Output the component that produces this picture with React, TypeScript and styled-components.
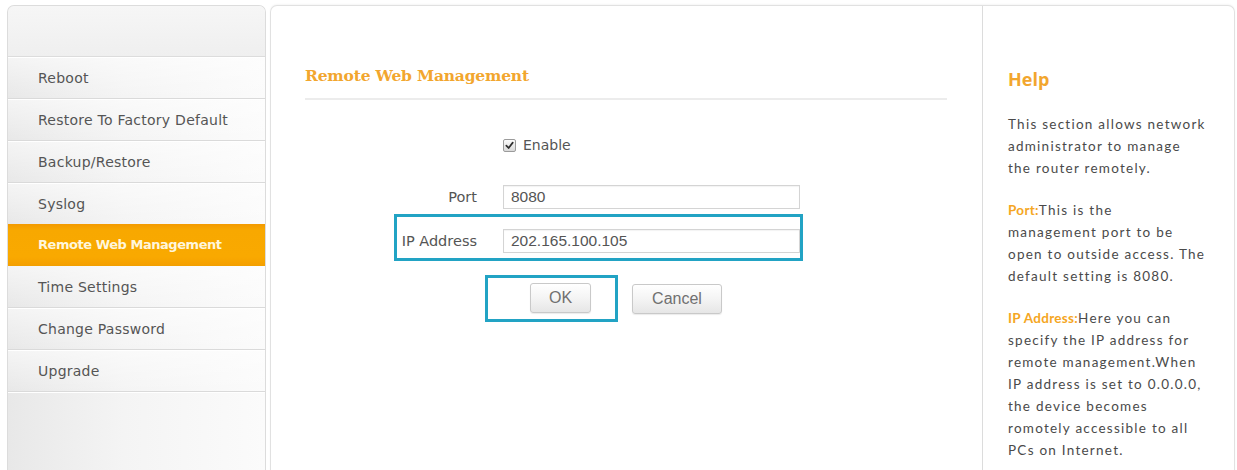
import React from "react";
import styled, { createGlobalStyle } from "styled-components";

const GlobalStyle = createGlobalStyle`
  html, body {
    margin: 0;
    padding: 0;
    background: #ffffff;
  }
  body {
    font-family: "DejaVu Sans", sans-serif;
    overflow: hidden;
  }
  * { box-sizing: border-box; }
`;

const Page = styled.div`
  display: flex;
  gap: 4px;
  height: 470px;
  padding: 5px 2px 0 7px;
  overflow: hidden;
`;

/* ---------- left navigation ---------- */

const Sidebar = styled.nav`
  width: 259px;
  flex-shrink: 0;
  height: 480px;
  border: 1px solid #dcdcdc;
  border-bottom: none;
  border-radius: 7px 7px 0 0;
  background: linear-gradient(to right, #e8e8e8 0%, #f4f4f4 45%, #fbfbfb 100%);
  overflow: hidden;
  display: flex;
  flex-direction: column;
`;

const SidebarHead = styled.div`
  height: 51px;
  border-bottom: 1px solid #dcdcdc;
  background: linear-gradient(to bottom, #f6f6f6, #efefef);
  box-shadow: 0 1px 0 #ffffff;
`;

const NavItem = styled.div<{ $active?: boolean }>`
  height: 42px;
  display: flex;
  align-items: center;
  padding-left: 30px;
  font-size: ${(p) => (p.$active ? "13px" : "14px")};
  letter-spacing: ${(p) => (p.$active ? "-0.45px" : "0.25px")};
  border-bottom: 1px solid ${(p) => (p.$active ? "#f2a000" : "#dadada")};
  box-shadow: ${(p) => (p.$active ? "none" : "0 1px 0 #ffffff")};
  color: ${(p) => (p.$active ? "#fff6dc" : "#555555")};
  font-weight: ${(p) => (p.$active ? 700 : 400)};
  background: ${(p) =>
    p.$active
      ? "linear-gradient(to bottom, #f39a00 0%, #f8a800 15%, #f9a900 80%, #f5a000 100%)"
      : "linear-gradient(to bottom, rgba(255,255,255,0.55), rgba(255,255,255,0))"};
  margin-top: ${(p) => (p.$active ? "-1px" : "0")};
`;

/* ---------- main panel ---------- */

const Panel = styled.main`
  flex: 1;
  height: 480px;
  border: 1px solid #e1e1e1;
  border-bottom: none;
  border-radius: 7px 7px 0 0;
  box-shadow: 0 -1px 2px rgba(0, 0, 0, 0.04);
  display: flex;
  background: #ffffff;
`;

const Content = styled.section`
  width: 711px;
  flex-shrink: 0;
  padding-top: 59px;
`;

const Heading = styled.h2`
  margin: 0 35px 0 34px;
  padding-bottom: 11px;
  border-bottom: 2px solid #ececec;
  font-family: "DejaVu Serif", serif;
  font-size: 15.5px;
  line-height: 22px;
  font-weight: 700;
  color: #f2a62e;
  letter-spacing: -0.2px;
`;

const Form = styled.div`
  margin: 35px 0 0 123px;
  display: flex;
  flex-direction: column;
`;

const Row = styled.div<{ $highlight?: boolean }>`
  width: 409px;
  display: flex;
  align-items: center;
  gap: 26px;
  border: 3px solid ${(p) => (p.$highlight ? "#22a3c4" : "transparent")};
  padding: ${(p) => (p.$highlight ? "12px 0 5px" : "0")};
  margin-top: ${(p) => (p.$highlight ? "2px" : "0")};
`;

const CheckRow = styled(Row)`
  height: 20px;
  margin-bottom: 27px;
`;

const Label = styled.label`
  width: 80px;
  flex-shrink: 0;
  text-align: right;
  font-size: 14.5px;
  color: #555555;
`;

const TextInput = styled.div`
  width: 297px;
  height: 24px;
  border: 1px solid #d4d4d4;
  box-shadow: inset 0 1px 1px rgba(0, 0, 0, 0.05);
  padding-left: 7px;
  display: flex;
  align-items: center;
  font-family: "Liberation Sans", Arial, sans-serif;
  font-size: 15.5px;
  color: #555555;
  background: #ffffff;
`;

const CheckLabel = styled.label`
  display: flex;
  align-items: center;
  gap: 7px;
  font-size: 14px;
  color: #555555;
`;

const CheckBox = styled.span`
  width: 13px;
  height: 13px;
  border: 1px solid #9b9b9b;
  border-radius: 2px;
  background: linear-gradient(to bottom, #fbfbfb, #d9d9d9);
  display: flex;
  align-items: center;
  justify-content: center;
`;

const Actions = styled.div`
  display: flex;
  align-items: center;
  gap: 14px;
  margin: 14px 0 0 91px;
`;

const Frame = styled.div`
  border: 3px solid #22a3c4;
  padding: 5px 24px 6px 42px;
`;

const Button = styled.button<{ $w: number }>`
  width: ${(p) => p.$w}px;
  height: 30px;
  border: 1px solid #c9c9c9;
  border-radius: 3px;
  background: linear-gradient(to bottom, #ffffff 0%, #f4f4f4 50%, #e6e6e6 100%);
  box-shadow: 0 1px 1px rgba(0, 0, 0, 0.08);
  font-family: "Liberation Sans", Arial, sans-serif;
  font-size: 16px;
  color: #707070;
  padding: 0;
  cursor: pointer;
`;

/* ---------- help column ---------- */

const Help = styled.aside`
  flex: 1;
  border-left: 1px solid #dcdcdc;
  padding: 61px 4px 0 25px;
`;

const HelpTitle = styled.h3`
  margin: 0 0 22px;
  font-family: "Open Sans", sans-serif;
  font-size: 18px;
  line-height: 24px;
  font-weight: 700;
  color: #f2a62e;
`;

const HelpText = styled.p`
  margin: 0 0 20px;
  font-family: Lato, sans-serif;
  font-size: 13.5px;
  line-height: 22px;
  letter-spacing: 1.25px;
  color: #4a4a4a;
  white-space: nowrap;
`;

const Key = styled.span`
  color: #f5a623;
  font-weight: 700;
  letter-spacing: 0.3px;
`;

const navItems = [
  "Reboot",
  "Restore To Factory Default",
  "Backup/Restore",
  "Syslog",
  "Remote Web Management",
  "Time Settings",
  "Change Password",
  "Upgrade",
];

const CheckMark = () => (
  <svg width="9" height="9" viewBox="0 0 10 10">
    <path d="M1.5 5.2 L4 7.8 L8.6 1.8" fill="none" stroke="#2e2e2e" strokeWidth="1.9" strokeLinecap="round" strokeLinejoin="round" />
  </svg>
);

export default function App() {
  return (
    <>
      <GlobalStyle />
      <Page>
        <Sidebar>
          <SidebarHead />
          {navItems.map((item) => (
            <NavItem key={item} $active={item === "Remote Web Management"}>
              {item}
            </NavItem>
          ))}
        </Sidebar>

        <Panel>
          <Content>
            <Heading>Remote Web Management</Heading>
            <Form>
              <CheckRow>
                <Label />
                <CheckLabel>
                  <CheckBox>
                    <CheckMark />
                  </CheckBox>
                  Enable
                </CheckLabel>
              </CheckRow>
              <Row>
                <Label>Port</Label>
                <TextInput>8080</TextInput>
              </Row>
              <Row $highlight>
                <Label>IP Address</Label>
                <TextInput>202.165.100.105</TextInput>
              </Row>
              <Actions>
                <Frame>
                  <Button $w={61}>OK</Button>
                </Frame>
                <Button $w={90}>Cancel</Button>
              </Actions>
            </Form>
          </Content>

          <Help>
            <HelpTitle>Help</HelpTitle>
            <HelpText>
              This section allows network
              <br />
              administrator to manage
              <br />
              the router remotely.
            </HelpText>
            <HelpText>
              <Key>Port:</Key>This is the
              <br />
              management port to be
              <br />
              open to outside access. The
              <br />
              default setting is 8080.
            </HelpText>
            <HelpText>
              <Key>IP Address:</Key>Here you can
              <br />
              specify the IP address for
              <br />
              remote management.When
              <br />
              IP address is set to 0.0.0.0,
              <br />
              the device becomes
              <br />
              romotely accessible to all
              <br />
              PCs on Internet.
            </HelpText>
          </Help>
        </Panel>
      </Page>
    </>
  );
}
